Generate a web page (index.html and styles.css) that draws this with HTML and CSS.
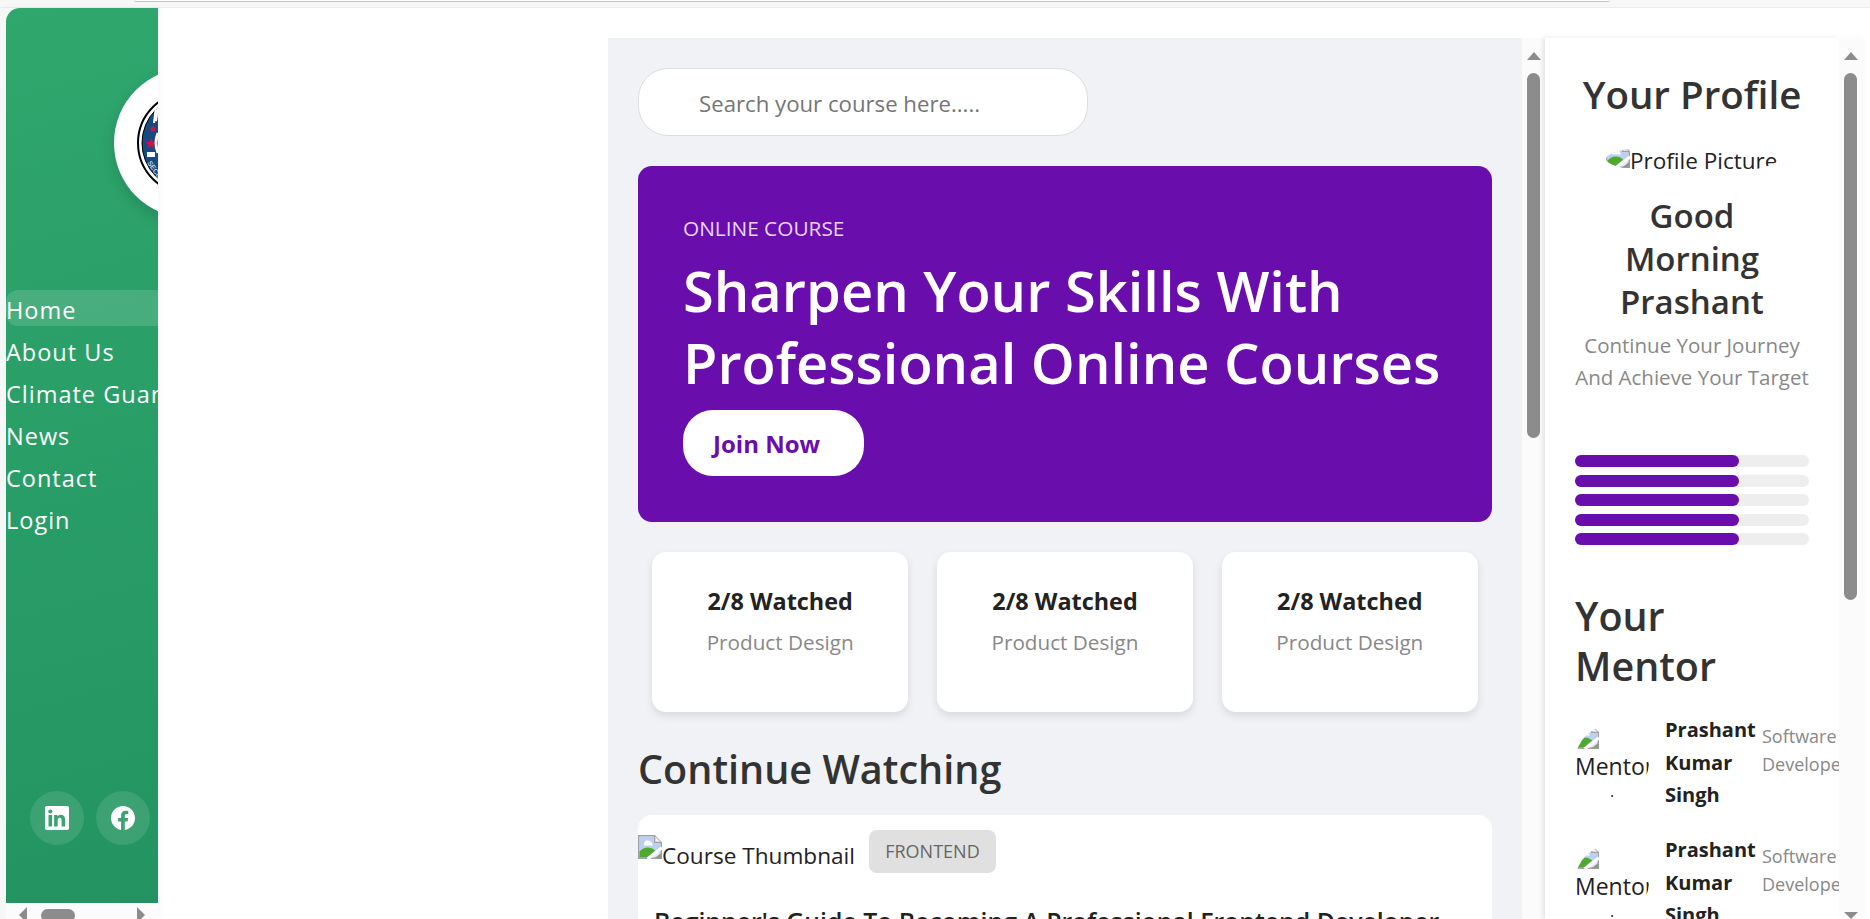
FILE: index.html
```html
<!DOCTYPE html>
<html lang="en">
<head>
  <meta charset="UTF-8">
  <title>Online Course Dashboard</title>
  <link rel="stylesheet" href="styles.css">
</head>
<body>

<div class="top-strip"><div class="address-bar"></div></div>

<div class="app">
  <!-- Green sidebar -->
  <div class="sidebar">
    <div class="sidebar-inner">
      <div class="logo">
        <svg class="seal" viewBox="0 0 104 104">
          <circle cx="52" cy="52" r="51" fill="#fff" stroke="#000" stroke-width="2"/>
          <circle cx="52" cy="52" r="47" fill="#174a82" stroke="#000" stroke-width="1"/>
          <polygon points="14,42 15.5,46 19.5,46 16.5,48.5 17.5,52.5 14,50 10.5,52.5 11.5,48.5 8.5,46 12.5,46" fill="#d80f45" transform="translate(0 5)"/>
          <circle cx="16" cy="38" r="2.5" fill="#d80f45"/>
          <circle cx="18" cy="30" r="2" fill="#d80f45"/>
          <path d="M19 15 L17 32 M21 17 L19 30" stroke="#fff" stroke-width="2"/>
          <rect x="10" y="61" width="8" height="5" fill="#fff"/>
          <path d="M21 42 Q17 52 21 62" stroke="#fff" stroke-width="3" fill="none"/>
          <text class="seal-text" x="10" y="72" transform="rotate(55 10 72)">SECU</text>
        </svg>
      </div>
      <ul class="nav">
        <li class="active">Home</li>
        <li>About Us</li>
        <li>Climate Guardian</li>
        <li>News</li>
        <li>Contact</li>
        <li>Login</li>
      </ul>
      <div class="socials">
        <div class="social">
          <svg viewBox="0 0 24 24" class="social-icon"><path d="M0 1.7C0 .8.8 0 1.8 0h20.4c1 0 1.8.8 1.8 1.7v20.6c0 .9-.8 1.7-1.8 1.7H1.8C.8 24 0 23.2 0 22.3V1.7zM7.1 20.5V9H3.5v11.5h3.6zM5.3 7.4c1.3 0 2.1-.9 2.1-2 0-1.200-.8-2-2-2-1.300 0-2.100.8-2.100 2 0 1.100.8 2 2 2zM12.700 20.500v-6.400c0-.3 0-.7.1-.9.3-.7.9-1.400 1.900-1.400 1.300 0 1.900 1 1.900 2.500v6.200h3.600v-6.600c0-3.500-1.900-5.200-4.400-5.200-2 0-2.900 1.100-3.400 1.900V9H9.100c.1 1.100 0 11.500 0 11.500h3.600z" fill="#fff"/></svg>
        </div>
        <div class="social">
          <svg viewBox="0 0 24 24" class="social-icon"><path d="M24 12.070C24 5.400 18.600 0 12 0S0 5.400 0 12.070c0 6 4.400 11 10.100 11.900v-8.400H7.100v-3.500h3V9.400c0-3 1.800-4.700 4.500-4.700 1.300 0 2.700.2 2.700.2v3h-1.500c-1.500 0-2 .9-2 1.900v2.300h3.300l-.5 3.500h-2.800v8.400C19.600 23.100 24 18.100 24 12.070z" fill="#fff"/></svg>
        </div>
      </div>
    </div>
    <div class="hscroll">
      <span class="arrow arrow-left"></span>
      <span class="hthumb"></span>
      <span class="arrow arrow-right"></span>
    </div>
  </div>

  <!-- Empty white gap kept by the sidebar margin -->
  <div class="main-wrap">
    <div class="content">
      <div class="search">Search your course here.....</div>

      <div class="hero">
        <p class="eyebrow">ONLINE COURSE</p>
        <h1>Sharpen Your Skills With Professional Online Courses</h1>
        <div class="join-btn">Join Now</div>
      </div>

      <div class="stats">
        <div class="stat"><h3>2/8 Watched</h3><p>Product Design</p></div>
        <div class="stat"><h3>2/8 Watched</h3><p>Product Design</p></div>
        <div class="stat"><h3>2/8 Watched</h3><p>Product Design</p></div>
      </div>

      <h2 class="section-title">Continue Watching</h2>

      <div class="course-card">
        <div class="course-top">
          <div class="thumb">
            <svg class="broken" viewBox="0 0 16 16"><use href="#broken-img"/></svg>
            <span>Course Thumbnail</span>
          </div>
          <span class="tag">FRONTEND</span>
        </div>
        <h3 class="course-title">Beginner's Guide To Becoming A Professional Frontend Developer</h3>
      </div>
    </div>

    <div class="vscroll">
      <span class="arrow arrow-up"></span>
      <span class="vthumb"></span>
    </div>
  </div>

  <!-- Profile panel -->
  <div class="profile">
    <h2 class="profile-title">Your Profile</h2>
    <div class="avatar">
      <svg class="broken" viewBox="0 0 16 16"><use href="#broken-img"/></svg><span>Profile Picture</span>
    </div>
    <h3 class="greeting">Good Morning Prashant</h3>
    <p class="tagline">Continue Your Journey And Achieve Your Target</p>

    <div class="bars">
      <div class="bar"><div class="bar-fill"></div></div>
      <div class="bar"><div class="bar-fill"></div></div>
      <div class="bar"><div class="bar-fill"></div></div>
      <div class="bar"><div class="bar-fill"></div></div>
      <div class="bar"><div class="bar-fill"></div></div>
    </div>

    <h2 class="mentor-title">Your Mentor</h2>

    <div class="mentor">
      <div class="mentor-img">
        <svg class="broken" viewBox="0 0 16 16"><use href="#broken-img"/></svg>
        <span>Mentor</span>
        <i>.</i>
      </div>
      <div class="mentor-name">Prashant Kumar Singh</div>
      <div class="mentor-role">Software Developer</div>
    </div>
    <div class="mentor">
      <div class="mentor-img">
        <svg class="broken" viewBox="0 0 16 16"><use href="#broken-img"/></svg>
        <span>Mentor</span>
        <i>.</i>
      </div>
      <div class="mentor-name">Prashant Kumar Singh</div>
      <div class="mentor-role">Software Developer</div>
    </div>
  </div>

  <div class="vscroll vscroll-right">
    <span class="arrow arrow-up"></span>
    <span class="vthumb vthumb-long"></span>
    <span class="arrow arrow-down"></span>
  </div>
</div>

<svg width="0" height="0" class="defs">
  <symbol id="broken-img" viewBox="0 0 16 16">
    <path d="M0.500 0.500H11L15.500 5V15.500H0.500Z" fill="#dfe8f8" stroke="#a0a0a0"/>
    <path d="M11 0.500V5H15.500" fill="#f2f2f2" stroke="#a0a0a0"/>
    <path d="M1 1H10.500V5.500H15V10.500H1Z" fill="#bcd0f2"/>
    <path d="M6 3.500C8 3.500 9.500 5 10 7H4C4 5 4.500 3.500 6 3.500Z" fill="#fff"/>
    <path d="M1 15V11C4 7.500 8.500 7.500 11.500 10.500L6 15Z" fill="#4fa92f"/>
    <path d="M6.500 16L16 8.500" stroke="#fff" stroke-width="2"/>
    <path d="M11 15.500L15.500 12V15.500Z" fill="#8a9a84"/>
  </symbol>
</svg>

</body>
</html>
```
FILE: styles.css
```css
* {
  margin: 0;
  padding: 0;
  box-sizing: border-box;
}

body {
  font-family: "Open Sans", "Noto Sans", sans-serif;
  background-color: #fff;
  color: #333;
  height: 919px;
  overflow: hidden;
}

.defs {
  position: absolute;
}

.top-strip {
  height: 8px;
  background-color: #f7f7f7;
  border-bottom: 1px solid #ececec;
}

.address-bar {
  margin-left: 134px;
  width: 1476px;
  height: 2px;
  background-color: #fff;
  border-bottom: 1px solid #c4c4c4;
  border-radius: 0 0 8px 8px;
}

.app {
  display: flex;
  height: 911px;
  background-color: #fff;
}

/* Sidebar */
.sidebar {
  width: 158px;
  flex-shrink: 0;
  padding-left: 6px;
  background-color: #f7f7f7;
  position: relative;
  z-index: 2;
  box-shadow: 2px 0 6px rgba(0, 0, 0, 0.04);
}

.sidebar-inner {
  width: 152px;
  height: 895px;
  background: linear-gradient(165deg, #2fa76d 0%, #239461 100%);
  border-radius: 14px 0 0 0;
  overflow: hidden;
  padding-top: 60px;
}

.logo {
  width: 150px;
  height: 150px;
  border-radius: 50%;
  background-color: #fff;
  margin-left: 108px;
  display: flex;
  align-items: center;
  justify-content: center;
  box-shadow: 0 6px 14px rgba(0, 0, 0, 0.15);
}

.seal {
  width: 104px;
  height: 104px;
  flex-shrink: 0;
}

.seal-text {
  font-family: "Liberation Sans", sans-serif;
  font-size: 7px;
  fill: #fff;
}

.nav {
  list-style: none;
  margin-top: 72px;
  width: 300px;
}

.nav li {
  height: 36px;
  margin-bottom: 6px;
  padding-top: 2px;
  font-size: 23.500px;
  line-height: 36px;
  letter-spacing: 1px;
  color: #fff;
  white-space: nowrap;
  border-radius: 12px;
}

.nav .active {
  background-color: rgba(255, 255, 255, 0.14);
}

.socials {
  display: flex;
  gap: 12px;
  margin-top: 255.400px;
  margin-left: 24px;
}

.social {
  width: 54px;
  height: 54px;
  border-radius: 50%;
  background-color: rgba(255, 255, 255, 0.11);
  display: flex;
  align-items: center;
  justify-content: center;
}

.social-icon {
  width: 24px;
  height: 24px;
}

.hscroll {
  height: 16px;
  background-color: #fbfbfb;
  display: flex;
  align-items: center;
  position: relative;
  width: 152px;
  overflow: hidden;
}

.arrow {
  display: block;
  width: 0;
  height: 0;
  border-style: solid;
  border-color: transparent;
  flex-shrink: 0;
}

.arrow-left {
  margin-left: 13px;
  margin-top: 8px;
  border-width: 8px 8px 8px 0;
  border-right-color: #8c8c8c;
}

.arrow-right {
  margin-left: 62px;
  margin-top: 8px;
  border-width: 8px 0 8px 8px;
  border-left-color: #8c8c8c;
}

.hthumb {
  width: 34px;
  height: 13px;
  margin-left: 14px;
  margin-top: 8px;
  background-color: #8c8c8c;
  border-radius: 6.500px;
  flex-shrink: 0;
}

/* Middle column */
.main-wrap {
  display: flex;
  margin-left: 450px;
  margin-top: 30px;
  height: 881px;
  flex-shrink: 0;
}

.content {
  width: 914px;
  height: 881px;
  background-color: #f0f2f5;
  padding: 30px;
  overflow: hidden;
}

.search {
  width: 450px;
  height: 68px;
  background-color: #fff;
  border: 1px solid #ddd;
  border-radius: 30px;
  padding-left: 60px;
  font-size: 22.200px;
  line-height: 70px;
  color: #757575;
}

.hero {
  margin-top: 30px;
  height: 356px;
  background-color: #6a0dad;
  border-radius: 14px;
  padding: 45px 45px 0;
  color: #fff;
}

.eyebrow {
  font-size: 20.800px;
  line-height: 34px;
  color: #e6d6f5;
}

.hero h1 {
  font-size: 56px;
  font-weight: 600;
  line-height: 72px;
  margin-top: 9px;
}

.join-btn {
  width: 181px;
  height: 66px;
  border-radius: 30px;
  background-color: #fff;
  color: #6a0dad;
  font-size: 24px;
  font-weight: 700;
  line-height: 68px;
  padding-left: 30px;
  margin-top: 12px;
}

.stats {
  display: flex;
  gap: 28.500px;
  padding: 0 14px;
  margin-top: 30px;
}

.stat {
  flex: 1;
  height: 160px;
  background-color: #fff;
  border-radius: 14px;
  box-shadow: 0 4px 8px rgba(0, 0, 0, 0.1);
  text-align: center;
  padding-top: 30px;
}

.stat h3 {
  font-size: 23.400px;
  font-weight: 700;
  line-height: 38px;
  color: #222;
}

.stat p {
  font-size: 20.700px;
  line-height: 32px;
  margin-top: 6px;
  color: #888;
}

.section-title {
  font-size: 39.600px;
  font-weight: 600;
  line-height: 50px;
  margin-top: 32px;
  color: #333;
}

.course-card {
  margin-top: 21px;
  background-color: #fff;
  border-radius: 14px 14px 0 0;
  height: 200px;
}

.course-top {
  display: flex;
  align-items: flex-start;
  padding-top: 15px;
}

.thumb {
  display: flex;
  align-items: flex-end;
  height: 33px;
  margin-top: 5px;
  font-size: 22.600px;
  line-height: 24px;
  color: #222;
}

.broken {
  width: 24px;
  height: 24px;
  flex-shrink: 0;
}

.thumb .broken {
  align-self: flex-start;
}

.tag {
  margin-left: 14px;
  width: 127px;
  height: 43px;
  border-radius: 8px;
  background-color: #e0e0e0;
  color: #666;
  font-size: 18px;
  line-height: 43px;
  text-align: center;
}

.course-title {
  font-size: 24.800px;
  font-weight: 600;
  line-height: 36px;
  margin: 30px 0 0 16px;
  color: #222;
  white-space: nowrap;
}

/* Fake scrollbars */
.vscroll {
  width: 23px;
  height: 881px;
  flex-shrink: 0;
  background-color: #fbfbfb;
  display: flex;
  flex-direction: column;
  align-items: center;
  padding-top: 14px;
  position: relative;
}

.arrow-up {
  border-width: 0 7.500px 8px;
  border-bottom-color: #8c8c8c;
}

.arrow-down {
  position: absolute;
  bottom: 0;
  border-width: 7px 7.500px 0;
  border-top-color: #8c8c8c;
}

.vthumb {
  width: 13px;
  height: 365px;
  margin-top: 13px;
  background-color: #8c8c8c;
  border-radius: 6.500px;
}

.vthumb-long {
  height: 527px;
}

/* Profile panel */
.profile {
  width: 294px;
  height: 881px;
  margin-top: 30px;
  flex-shrink: 0;
  background-color: #fff;
  padding: 31px 0 0 30px;
  overflow: hidden;
  box-shadow: -2px 0 5px rgba(0, 0, 0, 0.1);
  position: relative;
}

.vscroll-right {
  margin-top: 30px;
  box-shadow: 2px 0 6px rgba(0, 0, 0, 0.03);
}

.profile-title {
  width: 234px;
  font-size: 38.500px;
  font-weight: 600;
  line-height: 50px;
  text-align: center;
}

.avatar {
  width: 172px;
  height: 30px;
  margin: 25px 0 0 31px;
  border-radius: 50%;
  overflow: hidden;
  display: flex;
  align-items: flex-start;
  font-size: 22.500px;
  line-height: 34px;
  color: #222;
  white-space: nowrap;
}

.greeting {
  width: 234px;
  font-size: 33px;
  font-weight: 600;
  line-height: 43px;
  text-align: center;
  margin-top: 20px;
  padding: 0 30px;
}

.tagline {
  width: 234px;
  font-size: 20.500px;
  line-height: 32px;
  text-align: center;
  color: #888;
  margin-top: 6px;
}

.bars {
  width: 234px;
  margin-top: 62px;
}

.bar {
  height: 12px;
  margin-bottom: 7.500px;
  background-color: #eee;
  border-radius: 6px;
}

.bar-fill {
  width: 70%;
  height: 12px;
  background-color: #6a0dad;
  border-radius: 6px;
}

.mentor-title {
  width: 234px;
  font-size: 39.500px;
  font-weight: 600;
  line-height: 50px;
  margin-top: 46px;
}

.mentor {
  display: flex;
  height: 120px;
  width: 264px;
  margin-top: 23px;
  margin-bottom: -23px;
}

.mentor-img {
  width: 74px;
  height: 74px;
  margin-top: 11px;
  border-radius: 50%;
  overflow: hidden;
  flex-shrink: 0;
  font-size: 23px;
  line-height: 26px;
  color: #222;
}

.mentor-img .broken {
  display: block;
}

.mentor-img span {
  display: block;
  margin-top: 4px;
}

.mentor-img i {
  display: block;
  font-size: 16px;
  font-style: normal;
  text-align: center;
  line-height: 14px;
  margin-top: 5px;
}

.mentor-name {
  width: 96px;
  margin-left: 16px;
  font-size: 20px;
  font-weight: 700;
  line-height: 32.500px;
  color: #222;
}

.mentor-role {
  flex: 1;
  padding-left: 1px;
  font-size: 18px;
  line-height: 28px;
  margin-top: 8px;
  color: #888;
  overflow: hidden;
}
```
